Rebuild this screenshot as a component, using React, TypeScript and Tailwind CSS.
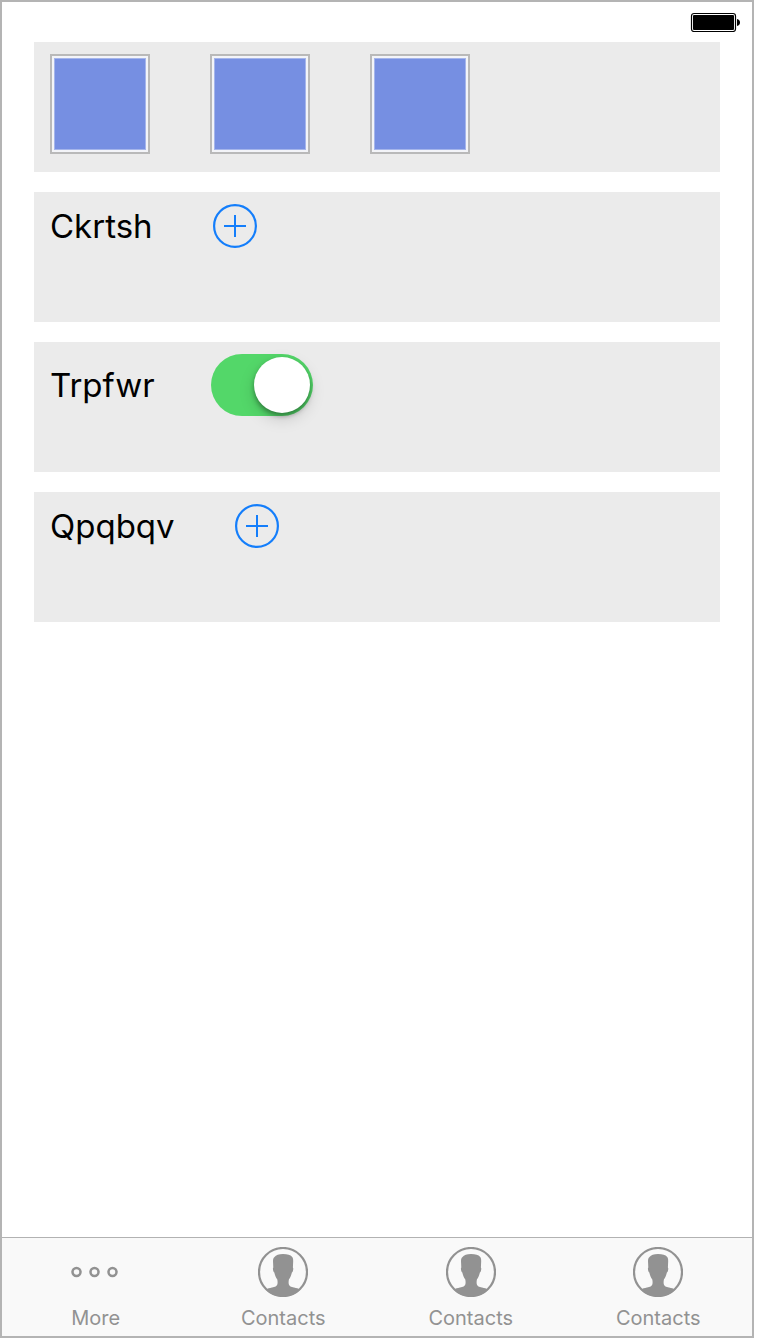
import { useState, type ReactNode } from "react";

function BatteryIcon() {
  return (
    <svg width="50" height="20" viewBox="0 0 50 20" role="img" aria-label="Battery full">
      <rect x="1.5" y="1.5" width="44" height="18" rx="2.5" fill="#fff" stroke="#000" strokeWidth="1.2" />
      <rect x="3" y="3" width="41" height="15" rx="1" fill="#000" />
      <path d="M47 7c2 .3 3 1.700 3 3.500s-1 3.200-3 3.500z" fill="#000" />
    </svg>
  );
}

function AddButton({ label }: { label: string }) {
  return (
    <button type="button" aria-label={label} className="size-11 shrink-0">
      <svg width="44" height="44" viewBox="0 0 44 44" fill="none" stroke="#147efb" strokeWidth="2.2">
        <circle cx="22" cy="22" r="20.900" />
        <path d="M11 22h22M22 11v22" strokeWidth="2" />
      </svg>
    </button>
  );
}

function Panel({ children, gap = "gap-15" }: { children: ReactNode; gap?: string }) {
  return (
    <section className="flex h-[130px] items-start bg-[#ebebeb] px-4 py-3">
      <div className={`flex items-center ${gap}`}>{children}</div>
    </section>
  );
}

function Tile() {
  return (
    <div className="size-25 border-2 border-[#b9b9b9] bg-[#f3f4f8] p-0.5">
      <div className="size-full border border-[#a5b5eb] bg-[#768fe2]" />
    </div>
  );
}

function MoreIcon() {
  return (
    <svg width="50" height="50" viewBox="0 0 50 50" fill="none" stroke="#929292" strokeWidth="2.5">
      <circle cx="5.500" cy="25" r="4" />
      <circle cx="23.500" cy="25" r="4" />
      <circle cx="41.500" cy="25" r="4" />
    </svg>
  );
}

function ContactIcon() {
  return (
    <svg width="50" height="50" viewBox="0 0 50 50">
      <circle cx="25" cy="25" r="24" fill="none" stroke="#929292" strokeWidth="2.2" />
      <path
        d="M25 7C29.500 7 32.500 8 34 9.800C35.200 11 35.300 13 35.100 16L34.900 20.500C35.500 21 35.300 22.500 34.900 24C34.700 24.900 34.300 25.300 33.900 25.500C33.400 28 32.300 30.500 30.900 32.500C30.500 34.500 30.500 36 30.900 37.500C31.300 39.200 33 39.900 36 40.400C38.500 40.900 40.500 41.400 42.300 42.500C38 47.100 31.900 49.800 25 49.800S12 47.100 7.700 42.500C9.500 41.400 11.500 40.900 14 40.400C17 39.900 18.900 39.200 19.300 37.500C19.700 36 19.700 34.500 19.300 32.500C17.900 30.500 16.800 28 16.300 25.500C15.900 25.300 15.500 24.900 15.300 24C14.900 22.500 14.700 21 15.300 20.500L15.100 16C14.900 13 15 11 16.500 9.900C18 8 20.800 7 25 7Z"
        fill="#929292"
      />
    </svg>
  );
}

const tabs = [
  { id: "more", label: "More", icon: <MoreIcon /> },
  { id: "contacts-1", label: "Contacts", icon: <ContactIcon /> },
  { id: "contacts-2", label: "Contacts", icon: <ContactIcon /> },
  { id: "contacts-3", label: "Contacts", icon: <ContactIcon /> },
];

export default function App() {
  const [enabled, setEnabled] = useState(true);

  return (
    <div className="flex min-h-screen bg-white pr-1.5 pb-0.5 font-['Inter',sans-serif] text-black">
      <div className="flex flex-1 flex-col border-2 border-[#b4b4b4]">
        <header className="flex h-10 items-center justify-end pr-3">
          <BatteryIcon />
        </header>
        <main className="flex flex-1 flex-col gap-5 px-8">
          <Panel>
            <Tile />
            <Tile />
            <Tile />
          </Panel>
          <Panel>
            <span className="text-[33px] leading-11">Ckrtsh</span>
            <AddButton label="Add Ckrtsh" />
          </Panel>
          <Panel gap="gap-14">
            <label htmlFor="trpfwr" className="text-[33px] leading-11">
              Trpfwr
            </label>
            <input
              id="trpfwr"
              type="checkbox"
              role="switch"
              checked={enabled}
              onChange={(event) => setEnabled(event.target.checked)}
              className="flex h-[62px] w-[102px] shrink-0 cursor-pointer appearance-none items-center rounded-full bg-[#c8c8c8] px-[3px] before:size-14 before:rounded-full before:bg-white before:shadow-[0_3px_5px_rgba(0,0,0,0.35),0_6px_16px_rgba(0,0,0,0.15)] before:content-[''] checked:justify-end checked:bg-[#53d769]"
            />
          </Panel>
          <Panel>
            <span className="text-[33px] leading-11">Qpqbqv</span>
            <AddButton label="Add Qpqbqv" />
          </Panel>
        </main>
        <nav className="grid grid-cols-4 border-t border-[#b2b2b2] bg-[#f9f9f9]">
          {tabs.map((tab) => (
            <button
              key={tab.id}
              type="button"
              className="flex flex-col items-center gap-[9px] pt-[9px] pb-1.5 text-xl leading-6 text-[#929292]"
            >
              {tab.icon}
              <span>{tab.label}</span>
            </button>
          ))}
        </nav>
      </div>
    </div>
  );
}
